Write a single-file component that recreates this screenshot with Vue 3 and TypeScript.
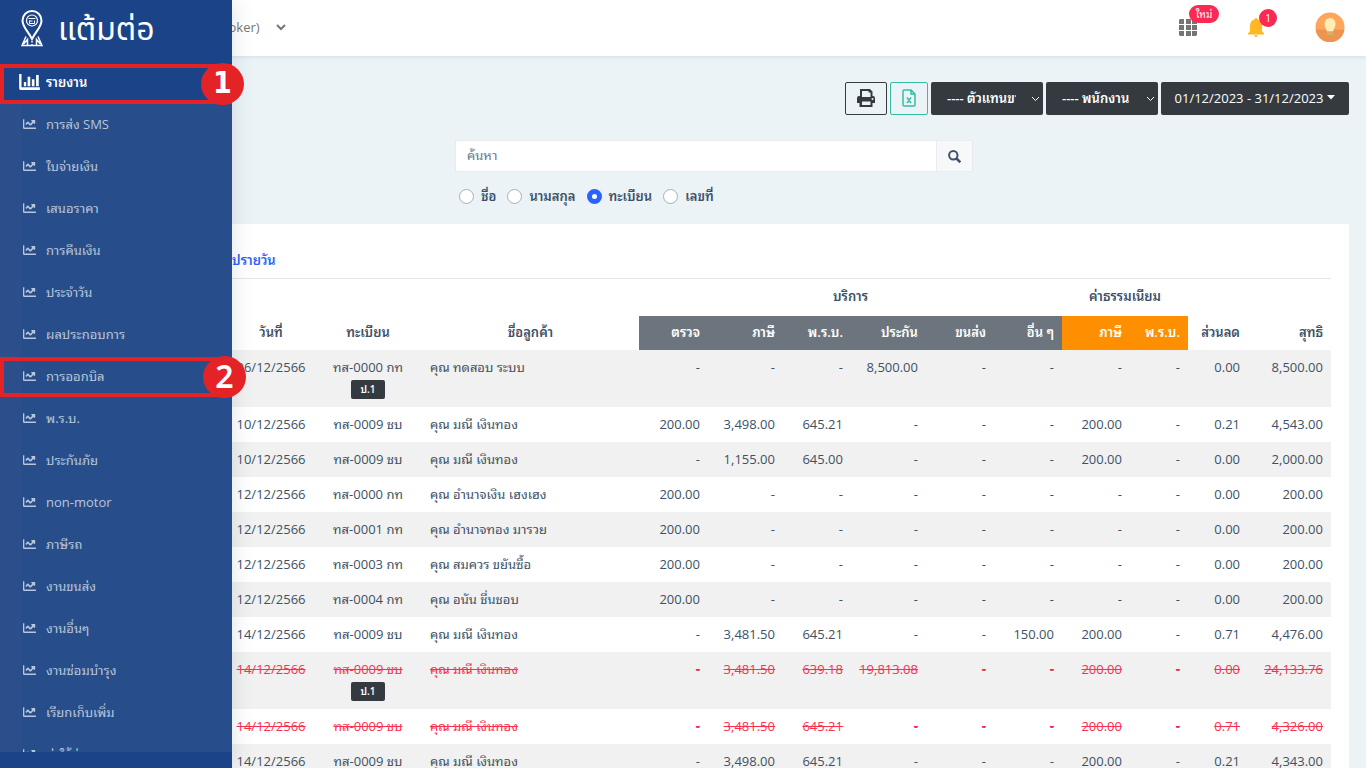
<script setup lang="ts">
interface Row {
  date: string
  plate: string
  tag?: string
  name: string
  values: string[]
  voided?: boolean
}

const menu: string[] = [
  'การส่ง SMS', 'ใบจ่ายเงิน', 'เสนอราคา', 'การคืนเงิน', 'ประจำวัน', 'ผลประกอบการ',
  'การออกบิล', 'พ.ร.บ.', 'ประกันภัย', 'non-motor', 'ภาษีรถ', 'งานขนส่ง',
  'งานอื่นๆ', 'งานซ่อมบำรุง', 'เรียกเก็บเพิ่ม', 'ค่าใช้จ่าย',
]
const markedItem = 'การออกบิล'

const fields = [
  { value: 'name', label: 'ชื่อ' },
  { value: 'surname', label: 'นามสกุล' },
  { value: 'plate', label: 'ทะเบียน' },
  { value: 'number', label: 'เลขที่' },
]

const rows: Row[] = [
  { date: '06/12/2566', plate: 'ทส-0000 กท', tag: 'ป.1', name: 'คุณ ทดสอบ ระบบ', values: ['-', '-', '-', '8,500.00', '-', '-', '-', '-', '0.00', '8,500.00'] },
  { date: '10/12/2566', plate: 'ทส-0009 ชบ', name: 'คุณ มณี เงินทอง', values: ['200.00', '3,498.00', '645.21', '-', '-', '-', '200.00', '-', '0.21', '4,543.00'] },
  { date: '10/12/2566', plate: 'ทส-0009 ชบ', name: 'คุณ มณี เงินทอง', values: ['-', '1,155.00', '645.00', '-', '-', '-', '200.00', '-', '0.00', '2,000.00'] },
  { date: '12/12/2566', plate: 'ทส-0000 กท', name: 'คุณ อำนาจเงิน เฮงเฮง', values: ['200.00', '-', '-', '-', '-', '-', '-', '-', '0.00', '200.00'] },
  { date: '12/12/2566', plate: 'ทส-0001 กท', name: 'คุณ อำนาจทอง มารวย', values: ['200.00', '-', '-', '-', '-', '-', '-', '-', '0.00', '200.00'] },
  { date: '12/12/2566', plate: 'ทส-0003 กท', name: 'คุณ สมควร ขยันซื้อ', values: ['200.00', '-', '-', '-', '-', '-', '-', '-', '0.00', '200.00'] },
  { date: '12/12/2566', plate: 'ทส-0004 กท', name: 'คุณ อนัน ชื่นชอบ', values: ['200.00', '-', '-', '-', '-', '-', '-', '-', '0.00', '200.00'] },
  { date: '14/12/2566', plate: 'ทส-0009 ชบ', name: 'คุณ มณี เงินทอง', values: ['-', '3,481.50', '645.21', '-', '-', '150.00', '200.00', '-', '0.71', '4,476.00'] },
  { date: '14/12/2566', plate: 'ทส-0009 ชบ', tag: 'ป.1', name: 'คุณ มณี เงินทอง', values: ['-', '3,481.50', '639.18', '19,813.08', '-', '-', '200.00', '-', '0.00', '24,133.76'], voided: true },
  { date: '14/12/2566', plate: 'ทส-0009 ชบ', name: 'คุณ มณี เงินทอง', values: ['-', '3,481.50', '645.21', '-', '-', '-', '200.00', '-', '0.71', '4,326.00'], voided: true },
  { date: '14/12/2566', plate: 'ทส-0009 ชบ', name: 'คุณ มณี เงินทอง', values: ['-', '3,498.00', '645.21', '-', '-', '-', '200.00', '-', '0.21', '4,343.00'] },
]
</script>

<template>
  <div class="app">
    <aside class="sidebar">
      <a class="brand" href="#">
        <svg class="brand-mark" viewBox="0 0 22 37" fill="none" stroke="#fff">
          <path d="M11 29C7 21 1.500 17 1.500 10.500a9.500 9.500 0 0 1 19 0C20.500 17 15 21 11 29z" stroke-width="2" />
          <circle cx="11" cy="10.500" r="5.500" stroke-width="1.200" />
          <path d="M7.500 8.500h7M8.500 10.500v3h5v-3M8.500 11h3" stroke-width="1" />
          <path d="M5 26.500L1 35.500h20L17 26.500M6.500 35.500V29.500L2.500 34M15.500 35.500V29.500l4 4.500M11 31v1.500M11 34v1.500" stroke-width="1.500" />
        </svg>
        <span class="brand-name">แต้มต่อ</span>
      </a>
      <a class="menu-head marked" href="#">
        <svg class="bars" viewBox="0 0 22 17" fill="#fff">
          <path d="M0 0h2.500v14H22v3H1.500A1.500 1.500 0 0 1 0 15.500zM5 8.500h2.500V13H5zM9 3h2.800v10H9zM13.500 5.500h2.800V13h-2.800zM18 1h2.800v12H18z" />
        </svg>
        <span>รายงาน</span>
        <b class="marker narrow">1</b>
      </a>
      <nav class="menu">
        <a v-for="item in menu" :key="item" href="#" class="menu-item" :class="{ marked: item === markedItem }">
          <svg class="line-icon" viewBox="0 64 512 384" fill="currentColor">
            <path d="M496 392H52V80c0-8.840-7.160-16-16-16H16C7.160 64 0 71.160 0 80v336c0 17.670 14.330 32 32 32h464c8.840 0 16-7.160 16-16v-24c0-8.840-7.160-16-16-16zM464 96H345.940c-21.380 0-32.090 25.850-16.970 40.970l32.400 32.400L288 242.750l-73.370-73.370c-12.500-12.500-32.760-12.500-45.250 0l-68.690 68.690c-6.250 6.250-6.250 16.380 0 22.630l22.620 22.620c6.250 6.250 16.380 6.250 22.630 0L192 237.250l73.370 73.370c12.500 12.500 32.760 12.500 45.250 0l96-96 32.400 32.400c15.120 15.120 40.970 4.410 40.970-16.970V112c0-8.840-7.150-16-15.990-16z" />
          </svg>
          <span>{{ item }}</span>
          <b v-if="item === markedItem" class="marker">2</b>
        </a>
      </nav>
      <div class="sidebar-foot"></div>
    </aside>

    <header class="topbar">
      <button class="account" type="button">
        (Broker)
        <svg viewBox="0 0 10 7" width="10" height="7" fill="none" stroke="currentColor" stroke-width="2"><path d="M1 1l4 4 4-4" /></svg>
      </button>
      <div class="top-actions">
        <button class="icon-button" type="button" aria-label="เมนู">
          <svg viewBox="0 0 18 17" width="18" height="17" fill="#757575">
            <path d="M1 0h4v5H0V1zM7 0h5v5H7zM13 0h4l1 1v4h-5zM0 6h5v5H0zM7 6h5v5H7zM13 6h5v5h-5zM0 12h5v5H1l-1-1zM7 12h5v5H7zM13 12h5v4l-1 1h-4z" />
          </svg>
          <span class="pill new">ใหม่</span>
        </button>
        <button class="icon-button" type="button" aria-label="แจ้งเตือน">
          <svg viewBox="0 0 16 19" width="16" height="19" fill="#ffb822">
            <path d="M8 0a1.500 1.500 0 0 1 1.500 1.500C12.500 2.200 14 4.500 14 7.500V13l2 2.500v1H0v-1L2 13V7.500c0-3 1.500-5.300 4.500-6A1.500 1.500 0 0 1 8 0zM6 17.300h4a2 1.700 0 0 1-4 0z" />
          </svg>
          <span class="pill count">1</span>
        </button>
        <button class="icon-button" type="button" aria-label="โปรไฟล์">
          <svg viewBox="0 0 30 30" width="30" height="30">
            <circle cx="15" cy="15" r="14.500" fill="#ffa65c" />
            <path d="M.6 17.500h28.800a14.500 14.500 0 0 1-28.800 0z" fill="#ef9350" />
            <path d="M15 6a5.500 5.500 0 0 1 5.500 6c0 3.500-2 5-2.500 7.500h-6c-.5-2.500-2.500-4-2.500-7.500A5.500 5.500 0 0 1 15 6z" fill="#ffedb5" />
            <path d="M12 19.500h6v3.500h-6z" fill="#dcae62" />
          </svg>
        </button>
      </div>
    </header>

    <main class="page">
      <div class="toolbar">
        <button class="tool print" type="button" aria-label="พิมพ์">
          <svg viewBox="0 0 18 18" width="18" height="18" fill="currentColor" fill-rule="evenodd">
            <path d="M3 0h10l2.500 2.500V7h.5a2 2 0 0 1 2 2v5h-2.500v4h-13v-4H0V9a2 2 0 0 1 2-2h1zM5 2v6h8.500V3.500H11.500V2zM5 12.500V16h8.500v-3.500zM15.500 9a1 1 0 1 0 0 2 1 1 0 0 0 0-2z" />
          </svg>
        </button>
        <button class="tool excel" type="button" aria-label="Excel">
          <svg viewBox="0 0 14 18" width="14" height="18" fill="none" stroke="currentColor" stroke-width="1.500">
            <path d="M9 1H2a1 1 0 0 0-1 1v14a1 1 0 0 0 1 1h10a1 1 0 0 0 1-1V5zM9 1v4h4M5 8.500l4 5.500M9 8.500L5 14" />
          </svg>
        </button>
        <label class="picker">
          <select aria-label="ตัวแทน"><option>---- ตัวแทนขาย</option></select>
          <svg viewBox="0 0 9 6" width="9" height="6" fill="none" stroke="#fff"><path d="M1 1l3.500 3.500L8 1" /></svg>
        </label>
        <label class="picker">
          <select aria-label="พนักงาน"><option>---- พนักงาน</option></select>
          <svg viewBox="0 0 9 6" width="9" height="6" fill="none" stroke="#fff"><path d="M1 1l3.500 3.500L8 1" /></svg>
        </label>
        <button class="tool range" type="button">
          01/12/2023 - 31/12/2023
          <svg viewBox="0 0 8 5" width="8" height="5" fill="currentColor"><path d="M0 0h8L4 4.500z" /></svg>
        </button>
      </div>

      <form class="search" @submit.prevent>
        <div class="search-box">
          <input type="text" placeholder="ค้นหา" aria-label="ค้นหา">
          <button type="submit" aria-label="ค้นหา">
            <svg viewBox="0 0 13 13" width="13" height="13" fill="none" stroke="currentColor" stroke-width="2">
              <circle cx="5.300" cy="5.300" r="4.200" /><path d="M8.500 8.500l3.800 3.800" stroke-width="2.500" />
            </svg>
          </button>
        </div>
        <div class="radios">
          <label v-for="f in fields" :key="f.value">
            <input type="radio" name="field" :value="f.value" :checked="f.value === 'plate'">
            {{ f.label }}
          </label>
        </div>
      </form>

      <section class="card">
        <div class="tabs"><a href="#">สรุปรายวัน</a></div>
        <table>
          <colgroup>
            <col class="c-date"><col class="c-plate"><col>
            <col class="c-first"><col class="c-wide"><col class="c-num"><col class="c-wide"><col class="c-num"><col class="c-num"><col class="c-num">
            <col class="c-small"><col class="c-disc"><col class="c-total">
          </colgroup>
          <thead>
            <tr class="groups">
              <th colspan="3"></th>
              <th colspan="6">บริการ</th>
              <th colspan="2">ค่าธรรมเนียม</th>
              <th colspan="2"></th>
            </tr>
            <tr class="heads">
              <th class="date">วันที่</th>
              <th>ทะเบียน</th>
              <th>ชื่อลูกค้า</th>
              <th class="num service">ตรวจ</th>
              <th class="num service">ภาษี</th>
              <th class="num service">พ.ร.บ.</th>
              <th class="num service">ประกัน</th>
              <th class="num service">ขนส่ง</th>
              <th class="num service">อื่น ๆ</th>
              <th class="num fee">ภาษี</th>
              <th class="num fee">พ.ร.บ.</th>
              <th class="num">ส่วนลด</th>
              <th class="num">สุทธิ</th>
            </tr>
          </thead>
          <tbody>
            <tr v-for="(r, i) in rows" :key="i" :class="{ voided: r.voided }">
              <td class="date">{{ r.date }}</td>
              <td class="plate"><span>{{ r.plate }}</span><span v-if="r.tag" class="tag">{{ r.tag }}</span></td>
              <td>{{ r.name }}</td>
              <td v-for="(v, j) in r.values" :key="j" class="num">{{ v }}</td>
            </tr>
          </tbody>
        </table>
      </section>
    </main>
  </div>
</template>

<style>
body {
  background: #ebf3f7;
}
</style>

<style scoped>
.app {
  position: relative;
  height: 100vh;
  overflow: hidden;
  background: #ebf3f7;
  color: #3d5166;
  font-family: "Open Sans", "Noto Sans Thai Looped", "Loma", "Noto Serif Thai", "Noto Sans Thai", sans-serif;
  font-size: 13px;
  line-height: 20px;
}

.app *,
.app *::before {
  box-sizing: border-box;
}

button,
input,
select {
  font: inherit;
  color: inherit;
}

a {
  color: inherit;
  text-decoration: none;
}

.sidebar {
  position: absolute;
  inset: 0 auto 0 0;
  z-index: 2;
  width: 232px;
  display: flex;
  flex-direction: column;
  background: #1b4388;
  box-shadow: 0 0 20px rgba(40, 60, 90, 0.16);
}

.brand {
  height: 64px;
  flex: none;
  display: flex;
  align-items: center;
  gap: 15px;
  padding: 0 21px 8px;
  color: #fff;
}

.brand-mark {
  width: 22px;
  height: 37px;
}

.brand-name {
  padding-top: 4px;
  font-family: "Noto Sans Thai", sans-serif;
  font-size: 32px;
  font-weight: 400;
  line-height: 48px;
}

.menu-head {
  position: relative;
  z-index: 1;
  height: 40px;
  flex: none;
  display: flex;
  align-items: center;
  gap: 6px;
  padding: 0 19px 4px;
  color: #fff;
  font-weight: 600;
}

.bars {
  width: 21px;
  height: 16px;
}

.menu {
  flex: 1;
  min-height: 0;
  overflow-x: visible;
  overflow-y: clip;
  background: linear-gradient(90deg, #2c4e8b 21px, #274e8a 21px);
}

.menu-item {
  position: relative;
  height: 42px;
  display: flex;
  align-items: center;
  gap: 10px;
  padding: 0 0 2px 23px;
  color: #b9c6dc;
}

.line-icon {
  width: 13px;
  height: 10px;
}

.sidebar-foot {
  height: 16px;
  flex: none;
}

.marked::before {
  content: "";
  position: absolute;
  inset: 0;
  height: 40px;
  margin: auto 0;
  border: 4px solid #e42326;
  border-right: 0;
}

.marker {
  position: absolute;
  z-index: 1;
  left: 203px;
  top: 0;
  bottom: 0;
  width: 43px;
  height: 42px;
  margin: auto 0;
  border-radius: 50%;
  background: #e42326;
  color: #fff;
  font: 600 32px/40px "Noto Sans", sans-serif;
  text-align: center;
}

.narrow {
  left: 201px;
  font: 700 30px/40px "DejaVu Sans Condensed", "DejaVu Sans", sans-serif;
}

.topbar {
  height: 56px;
  display: flex;
  align-items: center;
  justify-content: space-between;
  padding: 0 21px 2px 211px;
  background: #fff;
  box-shadow: 0 1px 4px rgba(60, 80, 110, 0.12);
}

.account {
  display: flex;
  align-items: center;
  gap: 16px;
  padding: 0;
  border: 0;
  background: none;
  color: #777;
}

.top-actions {
  display: flex;
  align-items: center;
  gap: 51px;
}

.icon-button {
  position: relative;
  display: flex;
  padding: 0;
  border: 0;
  background: none;
}

.pill {
  position: absolute;
  height: 18px;
  border-radius: 9px;
  background: #fb2a52;
  color: #fff;
  font-size: 10px;
  line-height: 18px;
  text-align: center;
}

.new {
  left: 10px;
  top: -14px;
  width: 30px;
}

.count {
  left: 11px;
  top: -9px;
  width: 18px;
}

.page {
  padding: 26px 17px 0 192px;
}

.toolbar {
  display: flex;
  justify-content: flex-end;
  gap: 3px;
}

.tool {
  height: 33px;
  display: flex;
  align-items: center;
  justify-content: center;
  border-radius: 2px;
  padding: 0 0 2px;
  background: transparent;
}

.print {
  width: 42px;
  border: 1px solid #343a40;
  color: #343a40;
}

.excel {
  width: 38px;
  border: 1px solid #34bfa3;
  color: #34bfa3;
}

.range {
  width: 188px;
  gap: 4px;
  border: 0;
  background: #343a40;
  color: #fff;
}

.picker {
  position: relative;
  width: 112px;
  height: 33px;
}

.picker select {
  appearance: none;
  width: 100%;
  height: 100%;
  padding: 0 27px 2px 16px;
  border: 0;
  border-radius: 2px;
  background: #343a40;
  color: #fff;
  font-weight: 600;
}

.picker svg {
  position: absolute;
  right: 3px;
  top: 14px;
}

.search {
  width: 518px;
  margin: 25px 0 0 263px;
}

.search-box {
  display: flex;
  height: 32px;
  border: 1px solid #e8ebf0;
}

.search-box input {
  flex: 1;
  min-width: 0;
  padding: 0 11px 2px;
  border: 0;
  background: #fff;
}

.search-box input::placeholder {
  color: #6c757d;
}

.search-box button {
  width: 36px;
  display: flex;
  align-items: center;
  justify-content: center;
  padding: 0;
  border: 0;
  border-left: 1px solid #e8ebf0;
  background: #f7f8fa;
  color: #464f68;
}

.radios {
  display: flex;
  gap: 11px;
  padding: 14px 4px 18px;
  font-weight: 600;
}

.radios label {
  display: flex;
  align-items: center;
  gap: 7px;
}

.radios input {
  appearance: none;
  width: 15px;
  height: 15px;
  margin: 0;
  border: 1px solid #a3b0bf;
  border-radius: 50%;
  background: #fff;
}

.radios input:checked {
  border: 5px solid #2962ff;
}

.card {
  padding: 16px 18px 0;
  background: #fff;
}

.tabs {
  height: 39px;
  padding: 10px 8px 0;
  border-bottom: 1px solid #e6e8eb;
  color: #2962ff;
  font-weight: 600;
}

table {
  width: 100%;
  border-collapse: collapse;
  table-layout: fixed;
  white-space: nowrap;
}

.c-date { width: 104px; }
.c-plate { width: 108px; }
.c-first { width: 69px; }
.c-wide { width: 75px; }
.c-num { width: 68px; }
.c-small { width: 58px; }
.c-disc { width: 60px; }
.c-total { width: 83px; }

th {
  padding: 0 8px 3px;
  font-weight: 600;
  text-align: center;
}

.groups th {
  height: 37px;
}

.heads th {
  height: 34px;
}

td {
  padding: 7px 8px 8px;
}

.heads .date,
td.date {
  padding-left: 26px;
}

td.date,
td.plate {
  text-align: center;
}

th.num,
td.num {
  text-align: right;
}

.service {
  background: #6c757d;
  color: #fff;
}

.fee {
  background: #fd8f00;
  color: #fff;
}

tbody tr {
  vertical-align: top;
}

tbody tr:nth-child(odd) {
  background: #f1f1f1;
}

.tag {
  display: block;
  width: 34px;
  height: 19px;
  margin: 3px auto 0;
  border-radius: 2px;
  background: #343a40;
  color: #fff;
  font-size: 10px;
  font-weight: 600;
  line-height: 19px;
}

.voided td:not(.plate),
.voided .plate span:first-child {
  color: #f9304f;
  text-decoration: line-through;
}
</style>
